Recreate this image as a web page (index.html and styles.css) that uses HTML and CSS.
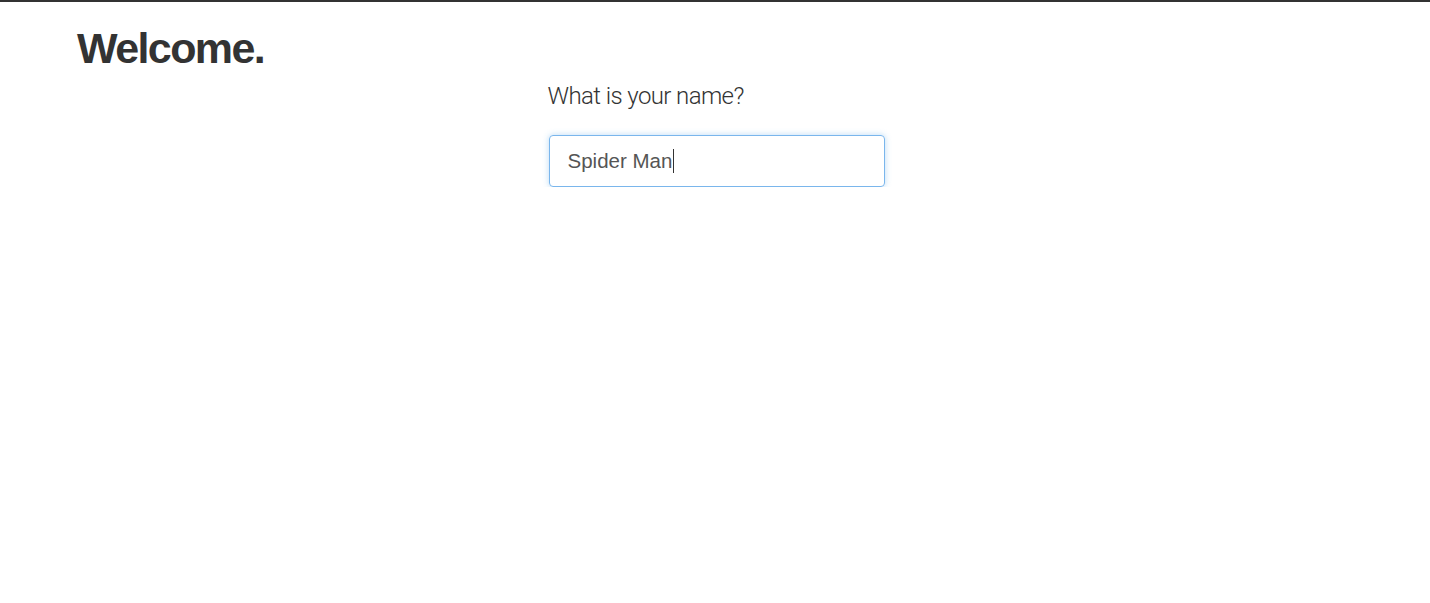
FILE: index.html
```html
<!DOCTYPE html>
<html>
<head>
<meta charset="utf-8">
<link rel="stylesheet" href="styles.css">
</head>
<body>
<div class="topbar"></div>
<header class="header">
  <h1 class="title">Welcome.</h1>
</header>
<main class="main">
  <form class="form">
    <label class="label">What is your name?</label>
    <div class="input"><span class="value">Spider Man</span><span class="caret"></span></div>
  </form>
</main>
</body>
</html>
```
FILE: styles.css
```css
html, body {
  margin: 0;
  padding: 0;
  background: #fff;
}
body {
  font-family: "Liberation Sans", Arial, sans-serif;
  color: #333;
}
.topbar {
  height: 2px;
  background: #333;
}
.header {
  padding: 0 0 0 77px;
}
.title {
  margin: 0;
  padding-top: 21px;
  font-size: 43px;
  line-height: 50px;
  font-weight: bold;
  letter-spacing: -1.6px;
  color: #333;
}
.main {
  display: flex;
  justify-content: center;
}
.form {
  width: 337px;
  display: flex;
  flex-direction: column;
  margin-left: 2px;
}
.label {
  font-family: Roboto, "Liberation Sans", sans-serif;
  font-weight: 300;
  font-size: 24px;
  line-height: 30px;
  letter-spacing: -0.6px;
  color: #333;
  margin-top: 8px;
}
.input {
  margin-top: 24px;
  margin-left: 1px;
  height: 50px;
  border: 1px solid #7ab6ec;
  border-radius: 4px;
  box-shadow: 0 0 6px rgba(102, 175, 233, 0.45);
  display: flex;
  align-items: center;
  padding-left: 18px;
  font-size: 20.5px;
  color: #555;
}
.caret {
  width: 1px;
  height: 24px;
  background: #333;
  margin-left: 1px;
}
```
